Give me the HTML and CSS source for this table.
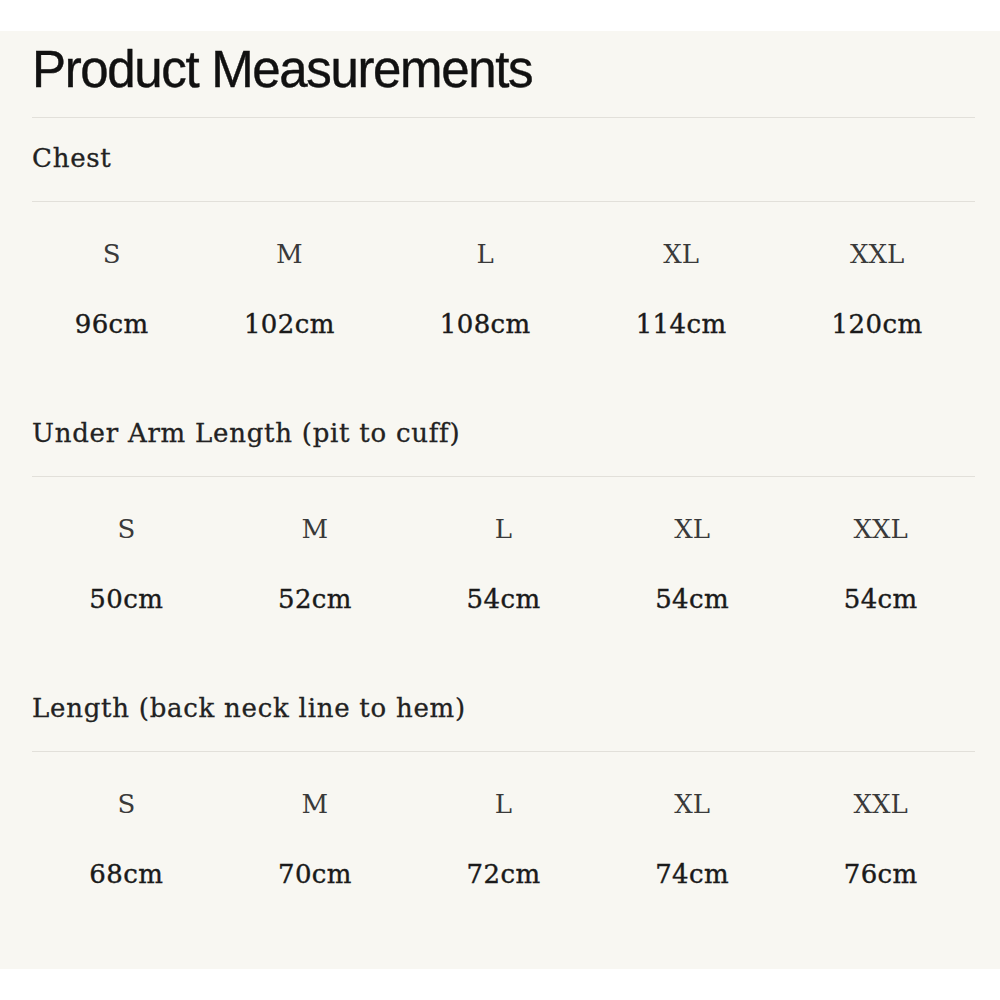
FILE: index.html
```html
<!DOCTYPE html>
<html lang="en">
<head>
<meta charset="utf-8">
<title>Product Measurements</title>
<link rel="stylesheet" href="styles.css">
</head>
<body>
<div class="panel">
  <h1 class="title">Product Measurements</h1>
  <section class="group">
    <h2 class="label">Chest</h2>
    <table class="sizes">
      <tr class="size-row"><td>S</td><td>M</td><td>L</td><td>XL</td><td>XXL</td></tr>
      <tr class="value-row"><td>96cm</td><td>102cm</td><td>108cm</td><td>114cm</td><td>120cm</td></tr>
    </table>
  </section>
  <section class="group">
    <h2 class="label">Under Arm Length (pit to cuff)</h2>
    <table class="sizes">
      <tr class="size-row"><td>S</td><td>M</td><td>L</td><td>XL</td><td>XXL</td></tr>
      <tr class="value-row"><td>50cm</td><td>52cm</td><td>54cm</td><td>54cm</td><td>54cm</td></tr>
    </table>
  </section>
  <section class="group">
    <h2 class="label">Length (back neck line to hem)</h2>
    <table class="sizes">
      <tr class="size-row"><td>S</td><td>M</td><td>L</td><td>XL</td><td>XXL</td></tr>
      <tr class="value-row"><td>68cm</td><td>70cm</td><td>72cm</td><td>74cm</td><td>76cm</td></tr>
    </table>
  </section>
</div>
</body>
</html>
```
FILE: styles.css
```css
html, body {
  margin: 0;
  padding: 0;
  background: #ffffff;
}
.panel {
  margin-top: 31px;
  background: #f8f7f2;
  padding: 9px 25px 26px 32px;
}
.title {
  margin: 0;
  font-family: "Liberation Sans", Arial, sans-serif;
  font-weight: 400;
  font-size: 51px;
  line-height: 60px;
  letter-spacing: -1.35px;
  color: #111111;
  -webkit-text-stroke: 0.4px #111111;
  padding-bottom: 17px;
  border-bottom: 1px solid #e2e0da;
}
.group {
  padding-bottom: 34px;
}
.label {
  margin: 0;
  padding: 20px 0 23px 0;
  font-family: "DejaVu Serif", "Liberation Serif", serif;
  font-weight: 400;
  font-size: 26px;
  line-height: 40px;
  letter-spacing: 0.75px;
  color: #222222;
  -webkit-text-stroke: 0.3px #222222;
  border-bottom: 1px solid #e2e0da;
}
.sizes {
  width: 100%;
  border-collapse: collapse;
  margin-top: 17px;
  font-family: "DejaVu Serif", "Liberation Serif", serif;
  font-size: 26px;
  line-height: 40px;
}
.sizes td {
  padding: 15px 0;
  text-align: center;
}
.size-row td {
  color: #3a3a3a;
}
.value-row td {
  color: #1a1a1a;
  letter-spacing: 0.4px;
  -webkit-text-stroke: 0.4px #1a1a1a;
}
```
